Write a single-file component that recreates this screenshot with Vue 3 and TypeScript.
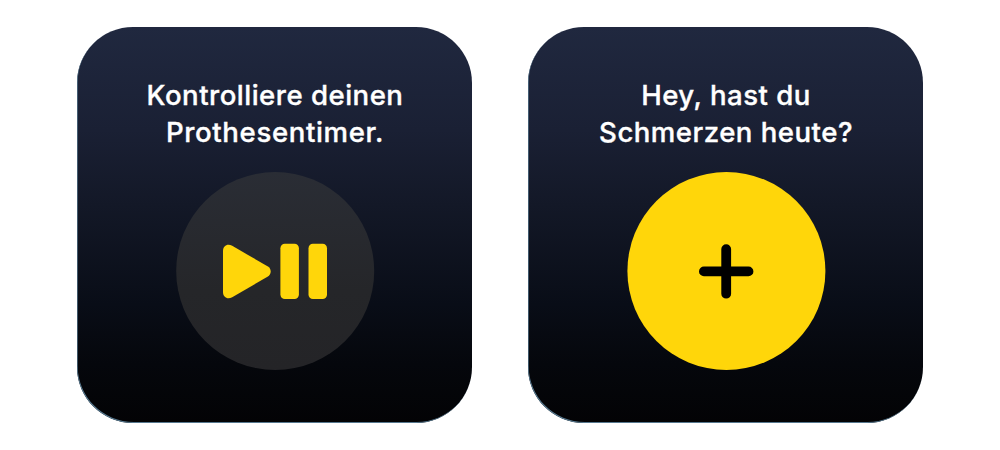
<script setup lang="ts">
interface Card {
  id: 'timer' | 'pain'
  lines: string[]
}

const cards: Card[] = [
  { id: 'timer', lines: ['Kontrolliere deinen', 'Prothesentimer.'] },
  { id: 'pain', lines: ['Hey, hast du', 'Schmerzen heute?'] },
]
</script>

<template>
  <main class="stage">
    <section v-for="card in cards" :key="card.id" class="card" :class="card.id">
      <h2 class="title">
        <span v-for="(line, i) in card.lines" :key="line" class="line" :class="`line-${i + 1}`">{{ line }}</span>
      </h2>
      <button class="action" type="button" :aria-label="card.lines.join(' ')">
        <svg v-if="card.id === 'timer'" class="icon" viewBox="0 0 200 200">
          <defs>
            <linearGradient id="disc" x1="0" y1="0" x2="0" y2="1">
              <stop offset="0" stop-color="#2a2d35" />
              <stop offset="0.6" stop-color="#252629" />
              <stop offset="1" stop-color="#242427" />
            </linearGradient>
          </defs>
          <circle cx="100.2" cy="100" r="99" fill="url(#disc)" />
          <path
            d="M48 80 C48 74.5 52.7 72.2 57.2 74.8 L92.5 95.3 C96.8 97.8 96.8 103.2 92.5 105.7 L57.2 126.2 C52.7 128.8 48 126.5 48 121 Z"
          />
          <rect x="105.4" y="72.8" width="18.5" height="55.2" rx="4.4" />
          <rect x="133.5" y="72.8" width="18.5" height="55.2" rx="4.4" />
        </svg>
        <svg v-else class="icon" viewBox="0 0 200 200">
          <circle cx="100.4" cy="100" r="99" />
          <path class="plus" d="M77.9 100.4 H122.5 M100.2 78.1 V122.7" />
        </svg>
      </button>
    </section>
  </main>
</template>

<style>
body {
  margin: 0;
  background: #fff;
}
</style>

<style scoped>
.stage {
  display: flex;
  gap: 56px;
  width: 1000px;
  height: 450px;
  padding: 27px 77px 0;
  box-sizing: border-box;
}
.card {
  width: 395px;
  height: 396px;
  box-sizing: border-box;
  padding: 50px 0 0 1px;
  display: flex;
  flex-direction: column;
  align-items: center;
  border-radius: 56px;
  background: linear-gradient(180deg, #20283f 0%, #1a2034 26%, #131827 45%, #090d17 70%, #05070c 85%, #030305 100%);
  box-shadow: inset 0.7px -1px 0 #56788f;
}
.title {
  margin: 0;
  font: 500 27.6px/37px Inter, "Liberation Sans", sans-serif;
  letter-spacing: 0.48px;
  -webkit-text-stroke: 0.35px #fff;
  color: #fff;
  text-align: center;
}
.line {
  display: block;
  white-space: nowrap;
}
.timer .line-2 {
  letter-spacing: 0.62px;
}
.action {
  flex: none;
  width: 200px;
  height: 200px;
  margin: 20px 0 0;
  padding: 0;
  border: 0;
  border-radius: 50%;
  background: none;
}
.icon {
  display: block;
  width: 200px;
  height: 200px;
  fill: #ffd60a;
}
.plus {
  fill: none;
  stroke: #000;
  stroke-width: 9.8;
  stroke-linecap: round;
}
</style>
